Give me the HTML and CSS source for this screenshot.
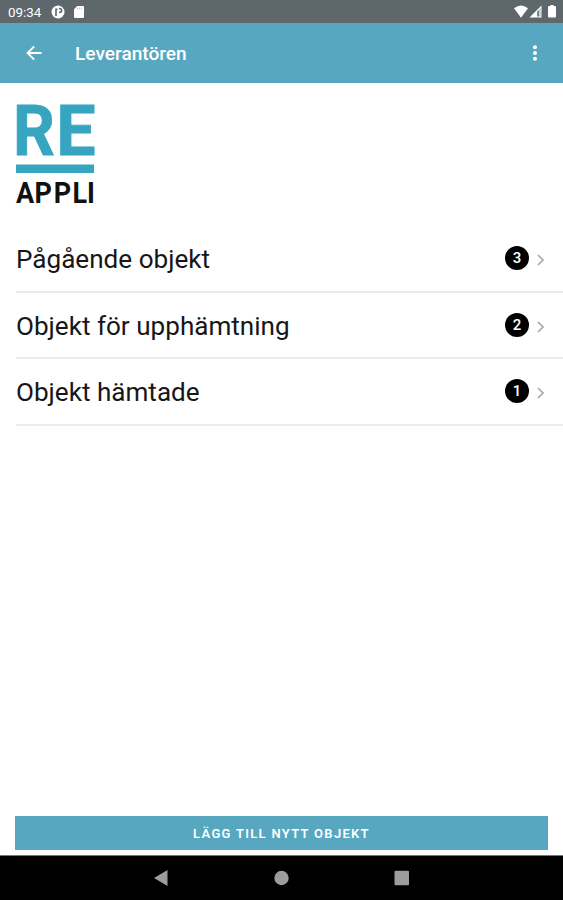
FILE: index.html
```html
<!DOCTYPE html>
<html lang="sv">
<head>
<meta charset="utf-8">
<title>Leverantören</title>
<link rel="stylesheet" href="styles.css">
</head>
<body>
<div class="status">
  <span class="time">09:34</span>
  <svg class="notice" width="14" height="14" viewBox="0 0 14 14"><circle cx="7" cy="7" r="6.5" fill="#fff"/><path d="M5 11V4.200h1.500M8 3.500h.7a1.900 1.900 0 0 1 0 3.800H8" fill="none" stroke="#5d676c" stroke-width="1.6"/></svg>
  <svg class="card" width="10" height="12" viewBox="0 0 10 12"><path d="M3.2 0H9a1 1 0 0 1 1 1v10a1 1 0 0 1-1 1H1a1 1 0 0 1-1-1V3.2z" fill="#fff"/><path d="M3.5 1.5v2M5.5 1.5v2M7.5 1.5v2" stroke="#cdd0d2"/></svg>
  <svg class="signals" width="44" height="14" viewBox="0 0 44 14"><path d="M0 3.3Q7-2.4 14 3.3L7 12.8z" fill="#fff"/><path d="M15.5 12.5 27.5.5v12z" fill="#fff"/><path d="M23.200 6.500v5L24.800 11.500v-6.500z" fill="#5d676c"/><path d="M26 3.500v8" stroke="#9da3a6"/><path d="M34 2a1 1 0 0 1 1-1h1.500V0h3v1H41a1 1 0 0 1 1 1v9.500a1 1 0 0 1-1 1h-6a1 1 0 0 1-1-1z" fill="#fff"/></svg>
</div>
<header class="toolbar">
  <svg class="back" width="16" height="16" viewBox="0 0 16 16"><path d="M15.500 8H1.500M8.200 1.300 1.500 8l6.700 6.700" fill="none" stroke="#fff" stroke-width="1.800"/></svg>
  <h1>Leverantören</h1>
  <svg class="more" width="4" height="16" viewBox="0 0 4 16"><g fill="#fff"><circle cx="2" cy="2.300" r="2"/><circle cx="2" cy="8" r="2"/><circle cx="2" cy="13.700" r="2"/></g></svg>
</header>
<main>
  <svg class="logo" width="80" height="100" viewBox="0 0 80 100">
    <text class="logo-re" y="50.300"><tspan x="-3" textLength="42" lengthAdjust="spacingAndGlyphs">R</tspan><tspan x="40.300">E</tspan></text>
    <rect y="59.500" width="78" height="8.500" fill="#36a5c0"/>
    <text class="logo-appli" transform="scale(.9 1)" x="0 20.500 42 62.800 79" y="98.500">APPLI</text>
  </svg>
  <ul class="list">
    <li><span class="label">Pågående objekt</span><span class="badge">3</span><svg class="chevron" width="7" height="12" viewBox="0 0 7 12"><path d="m1 1 5 5-5 5"/></svg></li>
    <li><span class="label">Objekt för upphämtning</span><span class="badge">2</span><svg class="chevron" width="7" height="12" viewBox="0 0 7 12"><path d="m1 1 5 5-5 5"/></svg></li>
    <li><span class="label">Objekt hämtade</span><span class="badge">1</span><svg class="chevron" width="7" height="12" viewBox="0 0 7 12"><path d="m1 1 5 5-5 5"/></svg></li>
  </ul>
  <button class="add">LÄGG TILL NYTT OBJEKT</button>
</main>
<nav class="navbar">
  <svg width="256" height="16" viewBox="0 0 256 16"><g fill="#9c9c9c"><path d="M0 8 13.500 0v16z"/><circle cx="127.500" cy="8" r="7.200"/><rect x="240.500" y=".8" width="14.500" height="14.500" rx="1"/></g></svg>
</nav>
</body>
</html>
```
FILE: styles.css
```css
* { box-sizing: border-box; }
body {
  margin: 0;
  height: 900px;
  display: flex;
  flex-direction: column;
  background: #fff;
  color: #171717;
  font-family: Roboto, sans-serif;
  overflow: hidden;
}
.status {
  height: 23px;
  display: flex;
  align-items: center;
  padding: 1px 8px 0;
  background: #5d676c;
  color: #fff;
}
.time { width: 43px; font-size: 13.4px; }
.card { margin-left: 9px; }
.signals { margin-left: auto; margin-right: -3px; }
.toolbar {
  height: 60px;
  display: flex;
  align-items: center;
  padding: 0 26px;
  background: #57a7c1;
  color: #fff;
}
.back { margin-top: -1px; }
h1 {
  margin: 1px 0 0 33px;
  font-size: 19.1px;
  font-weight: 500;
}
.more { margin-left: auto; }
main {
  flex: 1;
  display: flex;
  flex-direction: column;
  padding: 22px 0 5px 16px;
}
.logo { flex: none; overflow: visible; }
.logo-re {
  font-size: 70px;
  font-weight: 700;
  fill: #36a5c0;
  stroke: #36a5c0;
  stroke-width: 0.8;
}
.logo-appli { font-size: 30px; font-weight: 700; fill: #111; }
.list { list-style: none; margin: 21px 0 0; padding: 0; }
.list li {
  height: 66.6px;
  display: flex;
  align-items: center;
  padding-right: 19px;
  border-bottom: 2px solid #ececec;
}
.label { flex: 1; padding-top: 2px; font-size: 26.1px; }
.badge {
  width: 24px;
  height: 24px;
  margin-top: -0.4px;
  border-radius: 50%;
  background: #000;
  color: #fff;
  font-size: 15px;
  font-weight: 500;
  line-height: 25px;
  text-align: center;
}
.chevron {
  margin: 4px 0 0 8px;
  fill: none;
  stroke: #aaa;
  stroke-width: 1.7;
}
.add {
  margin: auto 15px 0 -1px;
  height: 34px;
  padding: 1px 0 0;
  border: 0;
  background: #57a7c1;
  color: #fff;
  font: 600 13px Roboto, sans-serif;
  letter-spacing: 1.3px;
}
.navbar {
  height: 45px;
  display: flex;
  justify-content: center;
  align-items: center;
  border-top: 1px solid #777;
  background: #000;
}
```
